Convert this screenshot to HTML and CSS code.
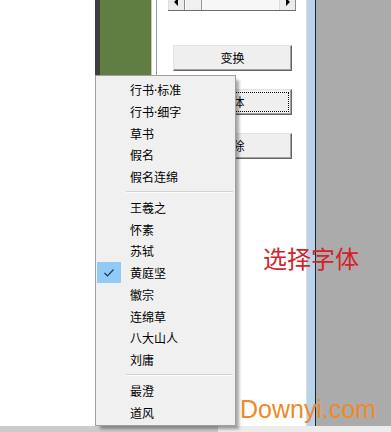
FILE: index.html
```html
<!DOCTYPE html>
<html lang="zh">
<head>
<meta charset="utf-8">
<title>字体选择</title>
<link rel="stylesheet" href="styles.css">
</head>
<body>
<div class="screen">
  <div class="main">
    <div class="blank"></div>
    <div class="darkbar"></div>
    <div class="green"></div>
    <div class="splitter"></div>
    <div class="panel">
      <div class="scrollbar">
        <div class="sb-arrow">
          <svg width="5" height="8" viewBox="0 0 5 8"><polygon points="4,0 4,8 0,4" fill="#000"/></svg>
        </div>
        <div class="sb-thumb"></div>
        <div class="sb-track"></div>
        <div class="sb-arrow">
          <svg width="5" height="8" viewBox="0 0 5 8"><polygon points="1,0 1,8 5,4" fill="#000"/></svg>
        </div>
      </div>
      <div class="btn">变换</div>
      <div class="btn focused">字体</div>
      <div class="btn">清除</div>
    </div>
    <div class="edge-light"></div>
    <div class="edge-blue"></div>
    <div class="edge-dark"></div>
    <div class="desk"></div>
  </div>
  <div class="bottom">
    <div class="bottom-left"></div>
    <div class="bottom-right"></div>
  </div>

  <div class="menu">
    <div class="item"><span class="check"></span><span class="label">行书·标准</span></div>
    <div class="item"><span class="check"></span><span class="label">行书·细字</span></div>
    <div class="item"><span class="check"></span><span class="label">草书</span></div>
    <div class="item"><span class="check"></span><span class="label">假名</span></div>
    <div class="item"><span class="check"></span><span class="label">假名连绵</span></div>
    <div class="sep"></div>
    <div class="item"><span class="check"></span><span class="label">王羲之</span></div>
    <div class="item"><span class="check"></span><span class="label">怀素</span></div>
    <div class="item"><span class="check"></span><span class="label">苏轼</span></div>
    <div class="item checked"><span class="check"><svg width="12" height="10" viewBox="0 0 12 10"><polyline points="1.5,5 4.5,8 10.5,1.5" fill="none" stroke="#2a3440" stroke-width="1.2"/></svg></span><span class="label">黄庭坚</span></div>
    <div class="item"><span class="check"></span><span class="label">徽宗</span></div>
    <div class="item"><span class="check"></span><span class="label">连绵草</span></div>
    <div class="item"><span class="check"></span><span class="label">八大山人</span></div>
    <div class="item"><span class="check"></span><span class="label">刘庸</span></div>
    <div class="sep"></div>
    <div class="item"><span class="check"></span><span class="label">最澄</span></div>
    <div class="item"><span class="check"></span><span class="label">道风</span></div>
  </div>

  <div class="note">选择字体</div>
  <div class="brand">Downyi.com</div>
</div>
</body>
</html>
```
FILE: styles.css
```css
html, body {
  margin: 0;
  padding: 0;
  background: #ffffff;
}

.screen {
  position: relative;
  width: 391px;
  height: 432px;
  overflow: hidden;
  font-family: "Noto Sans CJK SC", "Noto Sans", sans-serif;
}

.main {
  display: flex;
  height: 426px;
}

.blank {
  width: 95px;
  background: #ffffff;
}

.darkbar {
  width: 5px;
  background: #3e3e3e;
}

.green {
  width: 51px;
  background: #617e42;
}

.splitter {
  width: 4px;
  background: #ffffff;
  border-left: 1px solid #c6c6c6;
  border-right: 1px solid #9a9a9a;
}

.panel {
  width: 149px;
  background: #ffffff;
  display: flex;
  flex-direction: column;
  gap: 18px;
}

.scrollbar {
  display: flex;
  margin: -7px 0 16px 11px;
  width: 128px;
  height: 17px;
  border-bottom: 1px solid #6e6e6e;
  background: #f4f4f4;
}

.sb-arrow {
  width: 17px;
  display: flex;
  align-items: center;
  justify-content: center;
  background: #ececec;
  border-right: 1px solid #8c8c8c;
  border-left: 1px solid #dcdcdc;
  box-sizing: border-box;
}

.sb-thumb {
  width: 17px;
  background: #f0f0f0;
  border-left: 1px solid #ffffff;
  border-right: 1px solid #9b9b9b;
  box-sizing: border-box;
}

.sb-track {
  flex: 1;
  background: #f7f7f7;
}

.btn {
  margin-left: 16px;
  width: 119px;
  height: 26px;
  box-sizing: border-box;
  background: #efefef;
  border-top: 1px solid #e4e4e4;
  border-left: 1px solid #e4e4e4;
  border-right: 1px solid #646464;
  border-bottom: 1px solid #646464;
  box-shadow: inset -1px -1px 0 #a3a3a3;
  display: flex;
  align-items: center;
  justify-content: center;
  font-size: 12px;
  color: #000;
  line-height: 1;
}

.btn.focused {
  outline: 1px dotted #000;
  outline-offset: -4px;
}

.edge-light {
  width: 1px;
  background: #dcdcdc;
}

.edge-blue {
  width: 8px;
  background: #bad2ea;
}

.edge-dark {
  width: 1px;
  background: #1b2433;
}

.desk {
  flex: 1;
  background: #ababab;
}

.bottom {
  display: flex;
  height: 6px;
}

.bottom-left {
  width: 218px;
  background: #cbcbcb;
}

.bottom-right {
  flex: 1;
  background: #ececec;
}

/* popup menu */
.menu {
  position: absolute;
  left: 95px;
  top: 75px;
  width: 141px;
  box-sizing: border-box;
  background: #f0f0f0;
  border: 1px solid #a0a0a0;
  padding: 3px 0 2px 0;
  box-shadow: 4px 4px 3px -1px rgba(0, 0, 0, 0.35);
  display: flex;
  flex-direction: column;
  font-family: "Noto Sans", "Noto Sans CJK SC", sans-serif;
}

.item {
  display: flex;
  align-items: center;
  height: 21.75px;
  font-size: 12px;
  line-height: 21.75px;
  color: #000;
}

.label {
  padding-top: 2px;
}

.check {
  width: 24px;
  height: 21px;
  margin-left: 1px;
  margin-right: 9px;
  display: flex;
  align-items: center;
  justify-content: center;
}

.item.checked .check {
  background: #91c9f7;
}

.sep {
  height: 9px;
  display: flex;
  flex-direction: column;
  justify-content: center;
}

.sep::before {
  content: "";
  display: block;
  margin-left: 30px;
  margin-right: 2px;
  height: 1px;
  background: #d4d4d4;
  border-bottom: 1px solid #fbfbfb;
}

/* annotations over the screenshot */
.note {
  position: absolute;
  left: 263px;
  top: 246px;
  font-size: 24px;
  line-height: 24px;
  color: #d2232a;
  white-space: nowrap;
}

.brand {
  position: absolute;
  left: 240px;
  top: 397px;
  font-family: "Liberation Sans", Arial, sans-serif;
  font-size: 25px;
  line-height: 25px;
  color: #f0892a;
  white-space: nowrap;
}
```
